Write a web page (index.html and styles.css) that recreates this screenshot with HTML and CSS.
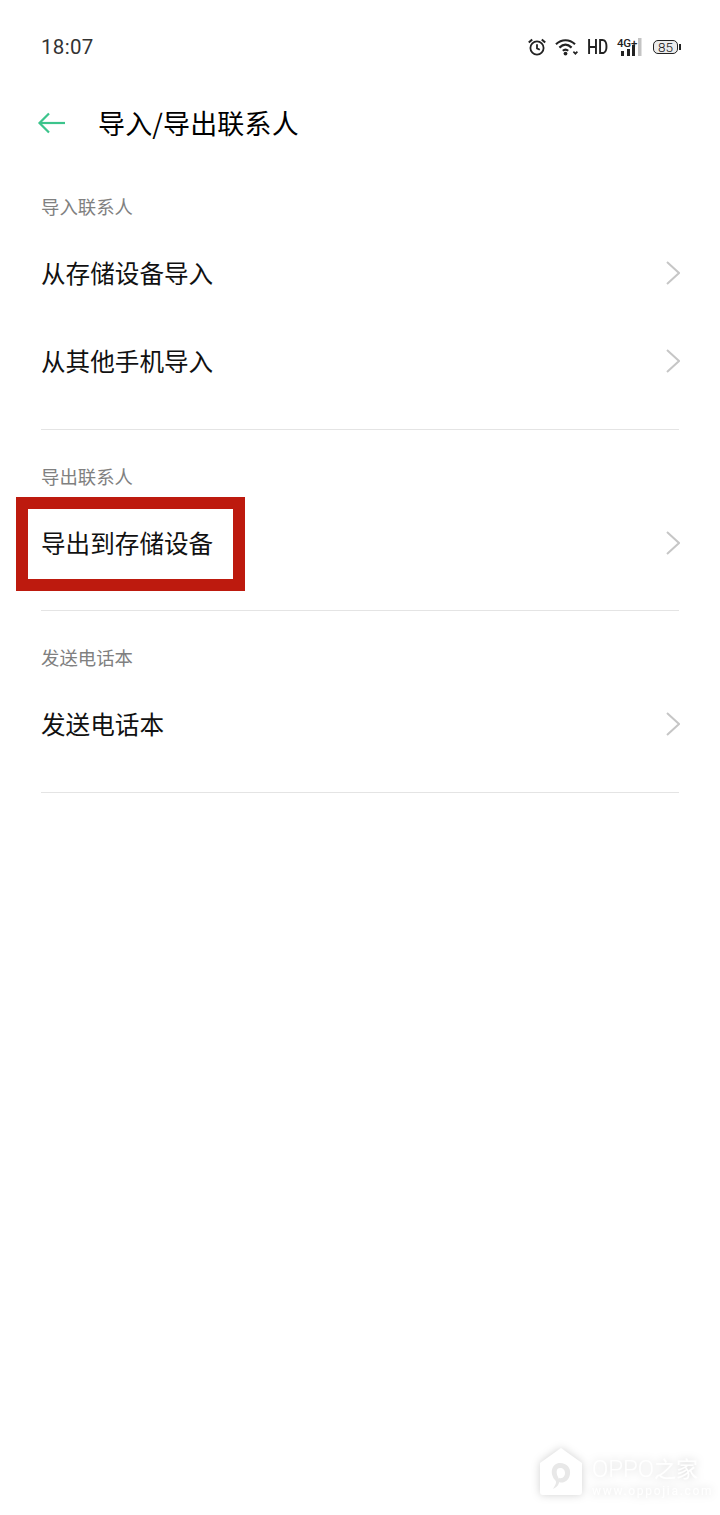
FILE: index.html
```html
<!DOCTYPE html>
<html lang="zh-CN">
<head>
    <meta charset="UTF-8">
    <meta name="viewport" content="width=device-width, initial-scale=1.0">
    <title>导入/导出联系人</title>
    <link rel="stylesheet" href="styles.css">
</head>
<body>
    <div class="status-bar">
        <span class="status-time">18:07</span>
        <div class="status-icons">
            <svg class="icon-alarm" width="18" height="18" viewBox="0 0 18 18" fill="none" stroke="#222" stroke-width="1.8">
                <circle cx="9" cy="10" r="6.6"/>
                <path d="M9 6.3V10.4L11.8 11.8"/>
                <path d="M.8 4.6L4.2 1.4M17.2 4.6L13.8 1.4" stroke-width="2"/>
            </svg>
            <svg class="icon-wifi" width="24" height="18" viewBox="0 0 24 18" fill="none" stroke="#222" stroke-width="2.2">
                <path d="M1 6.2C6.6 .9 14.4 .9 20 6.2"/>
                <path d="M4.4 9.6C8.2 6 12.8 6 16.6 9.6"/>
                <path d="M7.8 12.8C9.6 11.2 11.4 11.2 13.2 12.8"/>
                <circle cx="10.5" cy="15.6" r="1.9" fill="#222" stroke="none"/>
                <path d="M18.4 13.6L20.4 15.8L22.4 13.6" stroke-width="1.6"/>
            </svg>
            <span class="status-hd">HD</span>
            <div class="signal">
                <span class="signal-label">4G+</span>
                <svg width="26" height="19" viewBox="0 0 26 19" fill="#222">
                    <rect x="5" y="13" width="3" height="5"/>
                    <rect x="11" y="11" width="3" height="7"/>
                    <rect x="16" y="7" width="3" height="11"/>
                    <rect x="22" y="0" width="3.5" height="18" fill="#c4c4c4"/>
                </svg>
            </div>
            <div class="battery">
                <span class="battery-level">85</span>
            </div>
        </div>
    </div>

    <div class="title-bar">
        <svg class="back-icon" width="30" height="24" viewBox="0 0 30 24" fill="none" stroke="#3cc48c" stroke-width="2.2">
            <path d="M28 12H3"/>
            <path d="M12 2.5L2.5 12L12 21.5"/>
        </svg>
        <h1>导入/导出联系人</h1>
    </div>

    <div class="section section-tall">
        <div class="section-label">导入联系人</div>
        <div class="list-item">
            <span class="item-text">从存储设备导入</span>
            <svg class="chevron" width="14" height="24" viewBox="0 0 14 24" fill="none" stroke="#c6c6c6" stroke-width="2"><path d="M1 1L13 12L1 23"/></svg>
        </div>
        <div class="list-item">
            <span class="item-text">从其他手机导入</span>
            <svg class="chevron" width="14" height="24" viewBox="0 0 14 24" fill="none" stroke="#c6c6c6" stroke-width="2"><path d="M1 1L13 12L1 23"/></svg>
        </div>
    </div>

    <div class="section">
        <div class="section-label">导出联系人</div>
        <div class="list-item">
            <span class="item-text">导出到存储设备</span>
            <svg class="chevron" width="14" height="24" viewBox="0 0 14 24" fill="none" stroke="#c6c6c6" stroke-width="2"><path d="M1 1L13 12L1 23"/></svg>
        </div>
    </div>

    <div class="section section-tall">
        <div class="section-label">发送电话本</div>
        <div class="list-item">
            <span class="item-text">发送电话本</span>
            <svg class="chevron" width="14" height="24" viewBox="0 0 14 24" fill="none" stroke="#c6c6c6" stroke-width="2"><path d="M1 1L13 12L1 23"/></svg>
        </div>
    </div>

    <!-- red annotation box -->
    <div class="highlight-box"></div>

    <!-- watermark -->
    <div class="watermark">
        <svg width="44" height="50" viewBox="0 0 44 50">
            <path class="wm-house" d="M22 2L43 17V46Q43 49 40 49H4Q1 49 1 46V17Z"/>
            <path class="wm-letter" d="M14 43C17 38 18 36 16 34C10 27 13 17 21 17C28 17 32 22 31 28C30 35 24 38 20 36L20 32C24 33 26 30 26 27C26 24 24 22 21 22C17 22 17 27 19 31C22 36 19 41 14 43Z"/>
        </svg>
        <div class="wm-text">
            <div class="wm-name"><span class="wm-latin">OPPO</span>之家</div>
            <div class="wm-url">www.oppojia.com</div>
        </div>
    </div>
</body>
</html>
```

FILE: styles.css
```css
body {
    margin: 0;
    width: 720px;
    height: 1515px;
    position: relative;
    overflow: hidden;
    background-color: #fff;
    color: #111;
    font-family: "Noto Sans CJK SC", Roboto, sans-serif;
}

.status-bar {
    display: flex;
    justify-content: space-between;
    align-items: center;
    height: 94px;
    box-sizing: border-box;
    padding: 0 40px 0 41px;
}

.status-time {
    font-family: Roboto, sans-serif;
    font-size: 20.5px;
    letter-spacing: 0.3px;
    color: #333;
}

.status-icons {
    display: flex;
    align-items: center;
}

.icon-alarm {
    margin-right: 9px;
}

.icon-wifi {
    margin-right: 8px;
}

.status-hd {
    width: 21px;
    margin-right: 8px;
    font-family: Roboto, sans-serif;
    font-size: 20px;
    font-weight: 500;
    line-height: 20px;
    color: #222;
    white-space: nowrap;
    transform: scaleX(0.78);
    transform-origin: left center;
}

.signal {
    width: 26px;
    height: 19px;
    margin-right: 11px;
    position: relative;
}

.signal svg {
    display: block;
}

.signal-label {
    position: absolute;
    left: 1px;
    top: 0;
    font-family: Roboto, sans-serif;
    font-size: 11.5px;
    font-weight: 500;
    line-height: 10px;
    letter-spacing: -0.2px;
    color: #222;
}

.battery {
    box-sizing: border-box;
    width: 25px;
    height: 14px;
    margin-right: 2px;
    border: 1.5px solid #222;
    border-radius: 5px;
    background-color: #ececec;
    position: relative;
    display: flex;
    justify-content: center;
    align-items: center;
}

.battery::after {
    content: "";
    position: absolute;
    right: -4px;
    top: 2.5px;
    width: 2px;
    height: 6px;
    background-color: #222;
}

.battery-level {
    font-family: Roboto, sans-serif;
    font-size: 13.5px;
    font-weight: 300;
    line-height: 11px;
    color: #111;
}

.title-bar {
    display: flex;
    align-items: center;
    height: 58px;
    padding-left: 37px;
    margin-bottom: 8px;
}

.back-icon {
    margin-right: 31px;
}

.title-bar h1 {
    margin: 0;
    font-size: 27px;
    font-weight: 400;
    letter-spacing: 0.15px;
    line-height: 58px;
    color: #000;
}

.section {
    padding: 0 41px 24px;
    position: relative;
}

.section-tall {
    padding-bottom: 25px;
}

.section::after {
    content: "";
    position: absolute;
    left: 41px;
    right: 41px;
    bottom: 0;
    height: 1px;
    background-color: #e4e4e4;
}

.section-label {
    box-sizing: border-box;
    height: 69px;
    padding-top: 34px;
    font-size: 18.4px;
    line-height: 24px;
    color: #808080;
}

.list-item {
    display: flex;
    justify-content: space-between;
    align-items: center;
    height: 88px;
    font-size: 24.6px;
}

.item-text {
    padding-bottom: 2px;
}

.chevron {
    margin-right: -1px;
}

.highlight-box {
    position: absolute;
    left: 16px;
    top: 497px;
    width: 229px;
    height: 94px;
    box-sizing: border-box;
    border: 12px solid #bd1a0e;
}

.watermark {
    position: absolute;
    left: 539px;
    top: 1446px;
    display: flex;
    align-items: flex-start;
    gap: 9px;
    filter: drop-shadow(0 0 4px rgba(0, 0, 0, 0.18));
}

.wm-house {
    fill: #fff;
}

.wm-letter {
    fill: #e8e8e8;
}

.wm-text {
    color: #fff;
    padding-top: 7px;
}

.wm-name {
    font-size: 22px;
    line-height: 28px;
    white-space: nowrap;
}

.wm-latin {
    font-family: Roboto, sans-serif;
    font-size: 24px;
    font-weight: 300;
}

.wm-url {
    font-family: Roboto, sans-serif;
    font-size: 12px;
    letter-spacing: 1.7px;
    line-height: 14px;
    margin-top: 1px;
    white-space: nowrap;
}
```
